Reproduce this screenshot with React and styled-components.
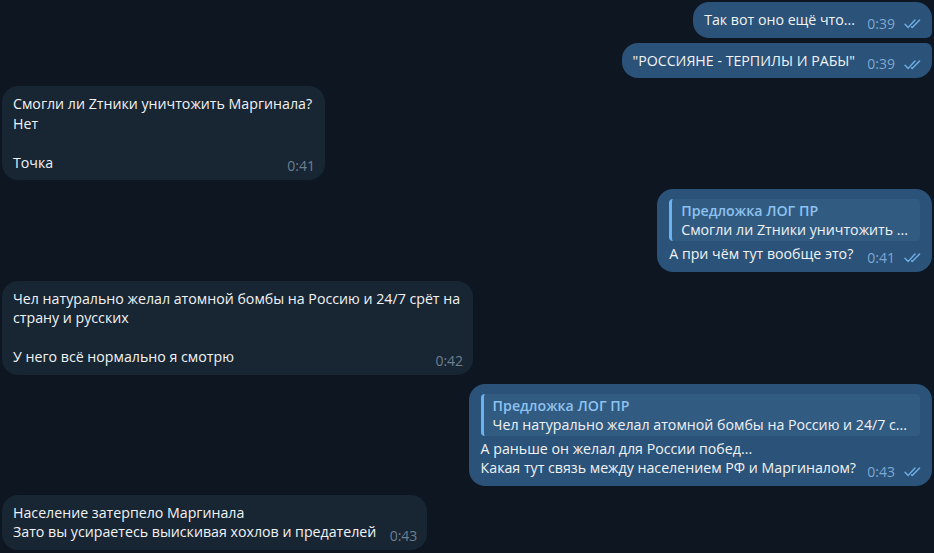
import styled, { createGlobalStyle } from "styled-components";

const GlobalStyle = createGlobalStyle`
  html, body {
    margin: 0;
    padding: 0;
    background: #0e1621;
  }
  body {
    font-family: "Open Sans", "Noto Sans", sans-serif;
    -webkit-font-smoothing: antialiased;
  }
`;

const messages = [
  { id: 1, out: true, time: "0:39", text: ["Так вот оно ещё что..."], joinNext: true },
  { id: 2, out: true, time: "0:39", text: ['"РОССИЯНЕ - ТЕРПИЛЫ И РАБЫ"'], joinPrev: true },
  {
    id: 3,
    time: "0:41",
    text: ["Смогли ли Zтники уничтожить Маргинала?", "Нет", "", "Точка"],
  },
  {
    id: 4,
    out: true,
    time: "0:41",
    reply: { name: "Предложка ЛОГ ПР", text: "Смогли ли Zтники уничтожить ..." },
    text: ["А при чём тут вообще это?"],
  },
  {
    id: 5,
    time: "0:42",
    text: [
      "Чел натурально желал атомной бомбы на Россию и 24/7 срёт на",
      "страну и русских",
      "",
      "У него всё нормально я смотрю",
    ],
  },
  {
    id: 6,
    out: true,
    time: "0:43",
    reply: {
      name: "Предложка ЛОГ ПР",
      text: "Чел натурально желал атомной бомбы на Россию и 24/7 с...",
    },
    text: ["А раньше он желал для России побед...", "Какая тут связь между населением РФ и Маргиналом?"],
  },
  {
    id: 7,
    time: "0:43",
    text: ["Население затерпело Маргинала", "Зато вы усираетесь выискивая хохлов и предателей"],
  },
];

const DoubleCheck = () => (
  <svg width="18" height="11" viewBox="0 0 18 11" fill="none">
    <path d="M1 6.2 L4.2 9.4 L11 2" stroke="#6fb0ea" strokeWidth="1.4" strokeLinecap="round" strokeLinejoin="round" />
    <path d="M7.6 8.8 L8.2 9.4 L15.6 2" stroke="#6fb0ea" strokeWidth="1.4" strokeLinecap="round" strokeLinejoin="round" />
  </svg>
);

const App = () => {
  return (
    <>
      <GlobalStyle />
      <Chat>
        {messages.map((m) => (
          <Row key={m.id} $out={m.out} $tight={m.joinPrev}>
            <Bubble $out={m.out} $joinNext={m.joinNext} $joinPrev={m.joinPrev} $reply={!!m.reply}>
              {m.reply && (
                <Reply>
                  <ReplyName>{m.reply.name}</ReplyName>
                  <ReplyText>{m.reply.text}</ReplyText>
                </Reply>
              )}
              <Text>
                {m.text.map((line, i) => (
                  <Line key={i}>
                    {line || "\u00a0"}
                    {i === m.text.length - 1 && <Spacer $out={m.out} />}
                  </Line>
                ))}
              </Text>
              <Meta $out={m.out}>
                <span>{m.time}</span>
                {m.out && <DoubleCheck />}
              </Meta>
            </Bubble>
          </Row>
        ))}
      </Chat>
    </>
  );
};

export default App;

const Chat = styled.div`
  display: flex;
  flex-direction: column;
  padding: 2px 2px 0 2px;
  height: 553px;
  box-sizing: border-box;
  overflow: hidden;
`;

const Row = styled.div`
  display: flex;
  flex-shrink: 0;
  justify-content: ${(p) => (p.$out ? "flex-end" : "flex-start")};
  margin-top: ${(p) => (p.$tight ? "5px" : "9px")};

  &:first-child {
    margin-top: 0;
  }

  &:nth-child(3) {
    margin-top: 8px;
  }
`;

const Bubble = styled.div`
  position: relative;
  max-width: 640px;
  box-sizing: border-box;
  padding: ${(p) => (p.$reply ? "10px 12px 8px 12px" : "8px 13px 8px 11px")};
  border-radius: 16px;
  ${(p) => p.$joinNext && (p.$out ? "border-bottom-right-radius: 6px;" : "border-bottom-left-radius: 6px;")}
  ${(p) => p.$joinPrev && (p.$out ? "border-top-right-radius: 6px;" : "border-top-left-radius: 6px;")}
  background: ${(p) => (p.$out ? "#2b5278" : "#182533")};
  color: #f1f3f5;
  font-size: 14.2px;
  line-height: 19.5px;
`;

const Reply = styled.div`
  background: rgba(120, 175, 230, 0.1);
  border-left: 3px solid #6ab2f2;
  border-radius: 4px;
  padding: 2px 12px 2px 9px;
  margin-bottom: 3px;
  line-height: 19px;
  white-space: nowrap;
`;

const ReplyName = styled.div`
  font-weight: 600;
  color: #8cc2f0;
`;

const ReplyText = styled.div`
  color: #eef2f6;
`;

const Text = styled.div`
  white-space: nowrap;
`;

const Line = styled.div``;

const Spacer = styled.span`
  display: inline-block;
  width: ${(p) => (p.$out ? "64px" : "38px")};
`;

const Meta = styled.div`
  position: absolute;
  right: 10px;
  bottom: 6px;
  display: flex;
  align-items: center;
  gap: 9px;
  font-size: 14px;
  line-height: 17px;
  color: ${(p) => (p.$out ? "#7da8d3" : "#6d7f8f")};

  svg {
    margin-top: 1px;
  }
`;
